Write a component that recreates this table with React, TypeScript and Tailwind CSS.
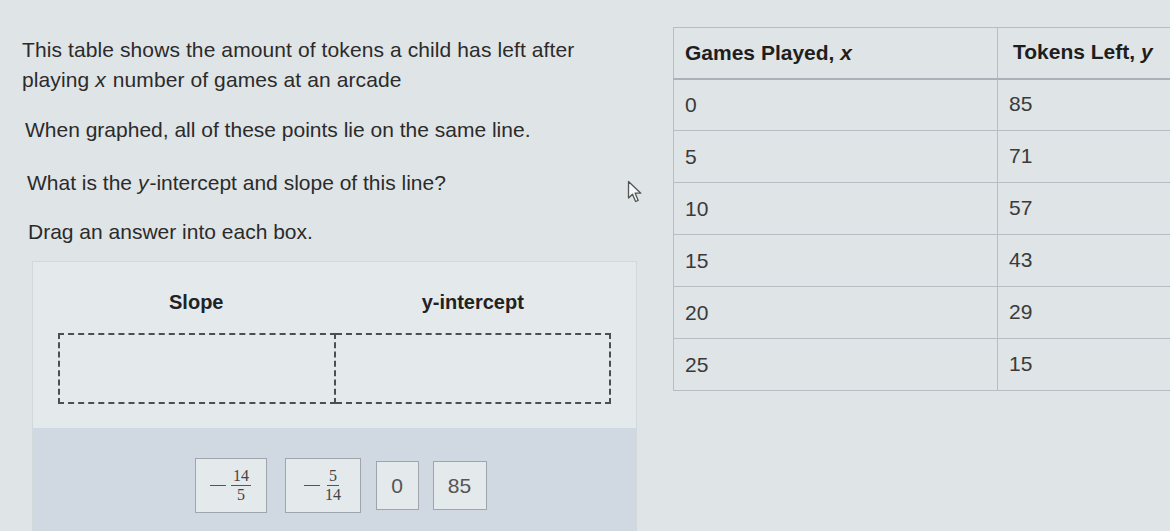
const rows = [
  { x: '0', y: '85' },
  { x: '5', y: '71' },
  { x: '10', y: '57' },
  { x: '15', y: '43' },
  { x: '20', y: '29' },
  { x: '25', y: '15' },
];

function Fraction({ num, den }: { num: string; den: string }) {
  return (
    <span className="flex items-center gap-[5px] font-['Liberation_Serif',serif] text-[#444]">
      <span className="w-[16px] h-[1.5px] bg-[#555]" />
      <span className="flex flex-col items-center text-[16px] leading-[18px]">
        <span className="px-[2px] border-b border-[#555]">{num}</span>
        <span>{den}</span>
      </span>
    </span>
  );
}

function Tile({ children, className }: { children: React.ReactNode; className: string }) {
  return (
    <div className={`flex items-center justify-center border border-[#9ea6ac] bg-[#e4e9eb] ${className}`}>
      {children}
    </div>
  );
}

export default function App() {
  return (
    <div className="relative flex w-[1170px] h-[531px] overflow-hidden bg-[#dfe4e7] font-['Liberation_Sans',Arial,sans-serif] text-[#2b2b2b]">
      <div className="w-[640px] shrink-0 pl-[22px] pt-[35px]">
        <div className="text-[21px] leading-[30px] tracking-[0.1px]">
          <p>This table shows the amount of tokens a child has left after</p>
          <p>
            playing <i className="pr-[1px]">x</i> number of games at an arcade
          </p>
        </div>
        <p className="mt-[20px] pl-[3px] text-[21px] leading-[30px]">When graphed, all of these points lie on the same line.</p>
        <p className="mt-[23px] pl-[5px] text-[21px] leading-[30px]">
          What is the <i className="pr-[1px]">y</i>-intercept and slope of this line?
        </p>
        <p className="mt-[19px] pl-[6px] text-[21px] leading-[30px]">Drag an answer into each box.</p>

        <div className="ml-[10px] mt-[14px] w-[605px] border border-[#d2d9dd] bg-[#e4e9eb]">
          <div className="px-[25px] pt-[28px]">
            <div className="flex font-semibold text-[20px] leading-[24px] text-[#222]">
              <div className="flex-1 text-center">Slope</div>
              <div className="flex-1 text-center">y-intercept</div>
            </div>
            <div className="mt-[19px] flex">
              <div className="h-[71px] flex-1 border-2 border-dashed border-[#4a4f53]" />
              <div className="h-[71px] flex-1 border-2 border-l-0 border-dashed border-[#4a4f53]" />
            </div>
          </div>
          <div className="mt-[24px] h-[110px] bg-[#d0d9e2] flex justify-center items-start pt-[30px] pl-[12px]">
            <Tile className="w-[72px] h-[55px]">
              <Fraction num="14" den="5" />
            </Tile>
            <Tile className="ml-[18px] w-[76px] h-[55px]">
              <Fraction num="5" den="14" />
            </Tile>
            <Tile className="ml-[15px] w-[43px] h-[49px] mt-[3px] text-[21px] text-[#555]">0</Tile>
            <Tile className="ml-[14px] w-[54px] h-[49px] mt-[3px] text-[21px] text-[#555]">85</Tile>
          </div>
        </div>
      </div>

      <div className="ml-[33px] mt-[27px]">
        <table className="w-[560px] border-collapse text-[21px]">
          <thead>
            <tr className="h-[51px] border-b-2 border-[#a9b2b8]">
              <th className="w-[324px] border-t border-l border-r border-[#b7bec3] pl-[11px] text-left font-semibold text-[#1e1e1e]">
                Games Played, <i>x</i>
              </th>
              <th className="border-t border-[#b7bec3] pl-[15px] pb-[2px] text-left font-semibold text-[#1e1e1e]">
                Tokens Left, <i>y</i>
              </th>
            </tr>
          </thead>
          <tbody>
            {rows.map((r) => (
              <tr key={r.x} className="h-[52px] border-b border-[#b7bec3]">
                <td className="border-l border-r border-[#b7bec3] pl-[11px] text-[#3a3a3a]">{r.x}</td>
                <td className="pl-[11px] pb-[2px] text-[#3a3a3a]">{r.y}</td>
              </tr>
            ))}
          </tbody>
        </table>
      </div>

      <svg
        width="17"
        height="24"
        viewBox="0 0 17 24"
        className="absolute left-[627px] top-[180px]"
      >
        <path
          d="M1.5 1.5 L1.5 18 L5.5 14.2 L8.6 21.5 L11.2 20.4 L8.2 13.2 L13.8 13.2 Z"
          fill="#f4f6f7"
          stroke="#555"
          strokeWidth="1.3"
          strokeLinejoin="round"
        />
      </svg>
    </div>
  );
}
